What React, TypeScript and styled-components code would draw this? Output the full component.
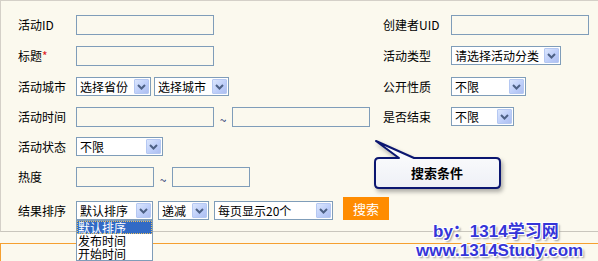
import styled, { createGlobalStyle } from "styled-components";

const GlobalStyle = createGlobalStyle`
    html, body {
        margin: 0;
        padding: 0;
        background: #fbf9ee;
    }
    body {
        font-family: "Noto Sans CJK SC", "Liberation Sans", sans-serif;
        font-size: 12px;
        color: #000;
    }
`;

const Page = styled.div`
    position: relative;
    width: 598px;
    height: 261px;
    overflow: hidden;
`;

const Panel = styled.div`
    position: relative;
    border-top: 1px solid #d4d0c8;
    border-left: 1px solid #d4d0c8;
    border-bottom: 1px solid #c9c6bd;
    height: 216px;
    padding: 14px 0 0 17px;
`;

const Row = styled.div<{ $h: number }>`
    display: grid;
    grid-template-columns: 58px 307px 68px 1fr;
    align-items: start;
    height: ${(p) => p.$h}px;
`;

const Label = styled.div`
    line-height: 20px;
    white-space: nowrap;
    font-size: 12px;
`;

const Star = styled.span`
    color: #e02020;
`;

const Fields = styled.div<{ $gap?: number }>`
    display: flex;
    align-items: center;
    gap: ${(p) => p.$gap ?? 3}px;
`;

const TextBox = styled.div<{ $w: number }>`
    flex-shrink: 0;
    box-sizing: border-box;
    width: ${(p) => p.$w}px;
    height: 20px;
    border: 1px solid #7f9db9;
    background: transparent;
`;

const Tilde = styled.span<{ $w: number }>`
    flex-shrink: 0;
    width: ${(p) => p.$w}px;
    text-align: center;
    color: #1a2a6a;
    font-size: 12px;
    line-height: 12px;
    padding-top: 6px;
`;

const SelectBox = styled.div<{ $w: number }>`
    flex-shrink: 0;
    box-sizing: border-box;
    width: ${(p) => p.$w}px;
    height: 19px;
    border: 1px solid #7f9db9;
    background: #fff;
    display: flex;
    align-items: center;
    justify-content: space-between;
    padding: 0 1px 0 3px;
    font-size: 12px;
    white-space: nowrap;
`;

const Arrow = styled.span`
    box-sizing: border-box;
    width: 15px;
    height: 15px;
    border: 1px solid #b5c8f2;
    border-radius: 1px;
    background: linear-gradient(135deg, #dbe6fd 0%, #bccdf9 60%, #aebff0 100%);
    display: flex;
    align-items: center;
    justify-content: center;
`;

const SearchButton = styled.button`
    flex-shrink: 0;
    width: 46px;
    height: 23px;
    margin-left: 5px;
    margin-top: -4px;
    border: none;
    background: #ff8c00;
    color: #fff;
    font-family: inherit;
    font-size: 13px;
    padding: 0;
`;

const DropList = styled.ul`
    position: absolute;
    left: 76px;
    top: 220px;
    width: 77px;
    box-sizing: border-box;
    margin: 0;
    padding: 0;
    list-style: none;
    background: #fff;
    border: 1px solid #7f9db9;
    z-index: 3;
`;

const DropItem = styled.li<{ $active?: boolean }>`
    height: 13px;
    line-height: 13px;
    font-size: 12px;
    padding-left: 1px;
    box-sizing: border-box;
    background: ${(p) => (p.$active ? "#316ac5" : "#fff")};
    color: ${(p) => (p.$active ? "#fff" : "#000")};
    outline: ${(p) => (p.$active ? "1px dotted #e8c060" : "none")};
    outline-offset: -1px;
`;

const Callout = styled.div`
    position: absolute;
    left: 369px;
    top: 135px;
    width: 140px;
    height: 58px;
    svg {
        filter: drop-shadow(2px 3px 2px rgba(80, 80, 80, 0.45));
    }
`;

const CalloutText = styled.div`
    position: absolute;
    left: 4px;
    top: 22px;
    width: 126px;
    line-height: 30px;
    text-align: center;
    font-weight: bold;
    font-size: 13px;
`;

const Lower = styled.div`
    margin-top: 11px;
    border-top: 1px solid #f5a030;
    border-left: 1px solid #f5a030;
    height: 30px;
`;

const Watermark = styled.div`
    position: absolute;
    right: 0;
    top: 222px;
    width: 182px;
    font-family: "Liberation Sans", "Noto Sans CJK SC", sans-serif;
    font-weight: bold;
    font-size: 17px;
    line-height: 19px;
    color: #3535d8;
    text-shadow: 1px 1px 0 #fff, -1px -1px 0 #fff, 1px -1px 0 #fff, -1px 1px 0 #fff, 2px 2px 2px #999;
    z-index: 4;
`;

const WatermarkLine = styled.div<{ $indent: number }>`
    padding-left: ${(p) => p.$indent}px;
    white-space: nowrap;
`;

const Chevron = () => (
    <svg width="9" height="6" viewBox="0 0 9 6">
        <path d="M1 1 L4.5 4.5 L8 1" fill="none" stroke="#4d6185" strokeWidth="2" />
    </svg>
);

const Select = ({ w, text }: { w: number; text: string }) => (
    <SelectBox $w={w}>
        <span>{text}</span>
        <Arrow>
            <Chevron />
        </Arrow>
    </SelectBox>
);

const App = () => {
    return (
        <Page>
            <GlobalStyle />
            <Panel>
                <Row $h={31}>
                    <Label>活动ID</Label>
                    <Fields>
                        <TextBox $w={138} />
                    </Fields>
                    <Label>创建者UID</Label>
                    <Fields>
                        <TextBox $w={138} />
                    </Fields>
                </Row>
                <Row $h={31}>
                    <Label>
                        标题<Star>*</Star>
                    </Label>
                    <Fields>
                        <TextBox $w={138} />
                    </Fields>
                    <Label>活动类型</Label>
                    <Fields>
                        <Select w={110} text="请选择活动分类" />
                    </Fields>
                </Row>
                <Row $h={30}>
                    <Label>活动城市</Label>
                    <Fields>
                        <Select w={75} text="选择省份" />
                        <Select w={75} text="选择城市" />
                    </Fields>
                    <Label>公开性质</Label>
                    <Fields>
                        <Select w={75} text="不限" />
                    </Fields>
                </Row>
                <Row $h={30}>
                    <Label>活动时间</Label>
                    <Fields $gap={0}>
                        <TextBox $w={138} />
                        <Tilde $w={18}>~</Tilde>
                        <TextBox $w={138} />
                    </Fields>
                    <Label>是否结束</Label>
                    <Fields>
                        <Select w={63} text="不限" />
                    </Fields>
                </Row>
                <Row $h={30}>
                    <Label>活动状态</Label>
                    <Fields>
                        <Select w={87} text="不限" />
                    </Fields>
                </Row>
                <Row $h={34}>
                    <Label>热度</Label>
                    <Fields $gap={0}>
                        <TextBox $w={78} />
                        <Tilde $w={18}>~</Tilde>
                        <TextBox $w={78} />
                    </Fields>
                </Row>
                <Row $h={20}>
                    <Label>结果排序</Label>
                    <Fields $gap={5}>
                        <Select w={77} text="默认排序" />
                        <Select w={51} text="递减" />
                        <Select w={119} text="每页显示20个" />
                        <SearchButton>搜索</SearchButton>
                    </Fields>
                </Row>
                <Callout>
                    <svg width="140" height="58" viewBox="0 0 140 58">
                        <defs>
                            <linearGradient id="bubble" x1="0" y1="0" x2="0" y2="1">
                                <stop offset="0" stopColor="#ffffff" />
                                <stop offset="1" stopColor="#eef0f6" />
                            </linearGradient>
                        </defs>
                        <path
                            d="M29 22 Q18 14 6 5 L44 22 L126 22 Q130 22 130 26 L130 48 Q130 52 126 52 L9 52 Q5 52 5 48 L5 26 Q5 22 9 22 Z"
                            fill="url(#bubble)"
                            stroke="#0b1670"
                            strokeWidth="2"
                            strokeLinejoin="round"
                        />
                    </svg>
                    <CalloutText>搜索条件</CalloutText>
                </Callout>
            </Panel>
            <Lower />
            <DropList>
                <DropItem $active>默认排序</DropItem>
                <DropItem>发布时间</DropItem>
                <DropItem>开始时间</DropItem>
            </DropList>
            <Watermark>
                <WatermarkLine $indent={17}>by：1314学习网</WatermarkLine>
                <WatermarkLine $indent={0}>www.1314Study.com</WatermarkLine>
            </Watermark>
        </Page>
    );
};

export default App;
